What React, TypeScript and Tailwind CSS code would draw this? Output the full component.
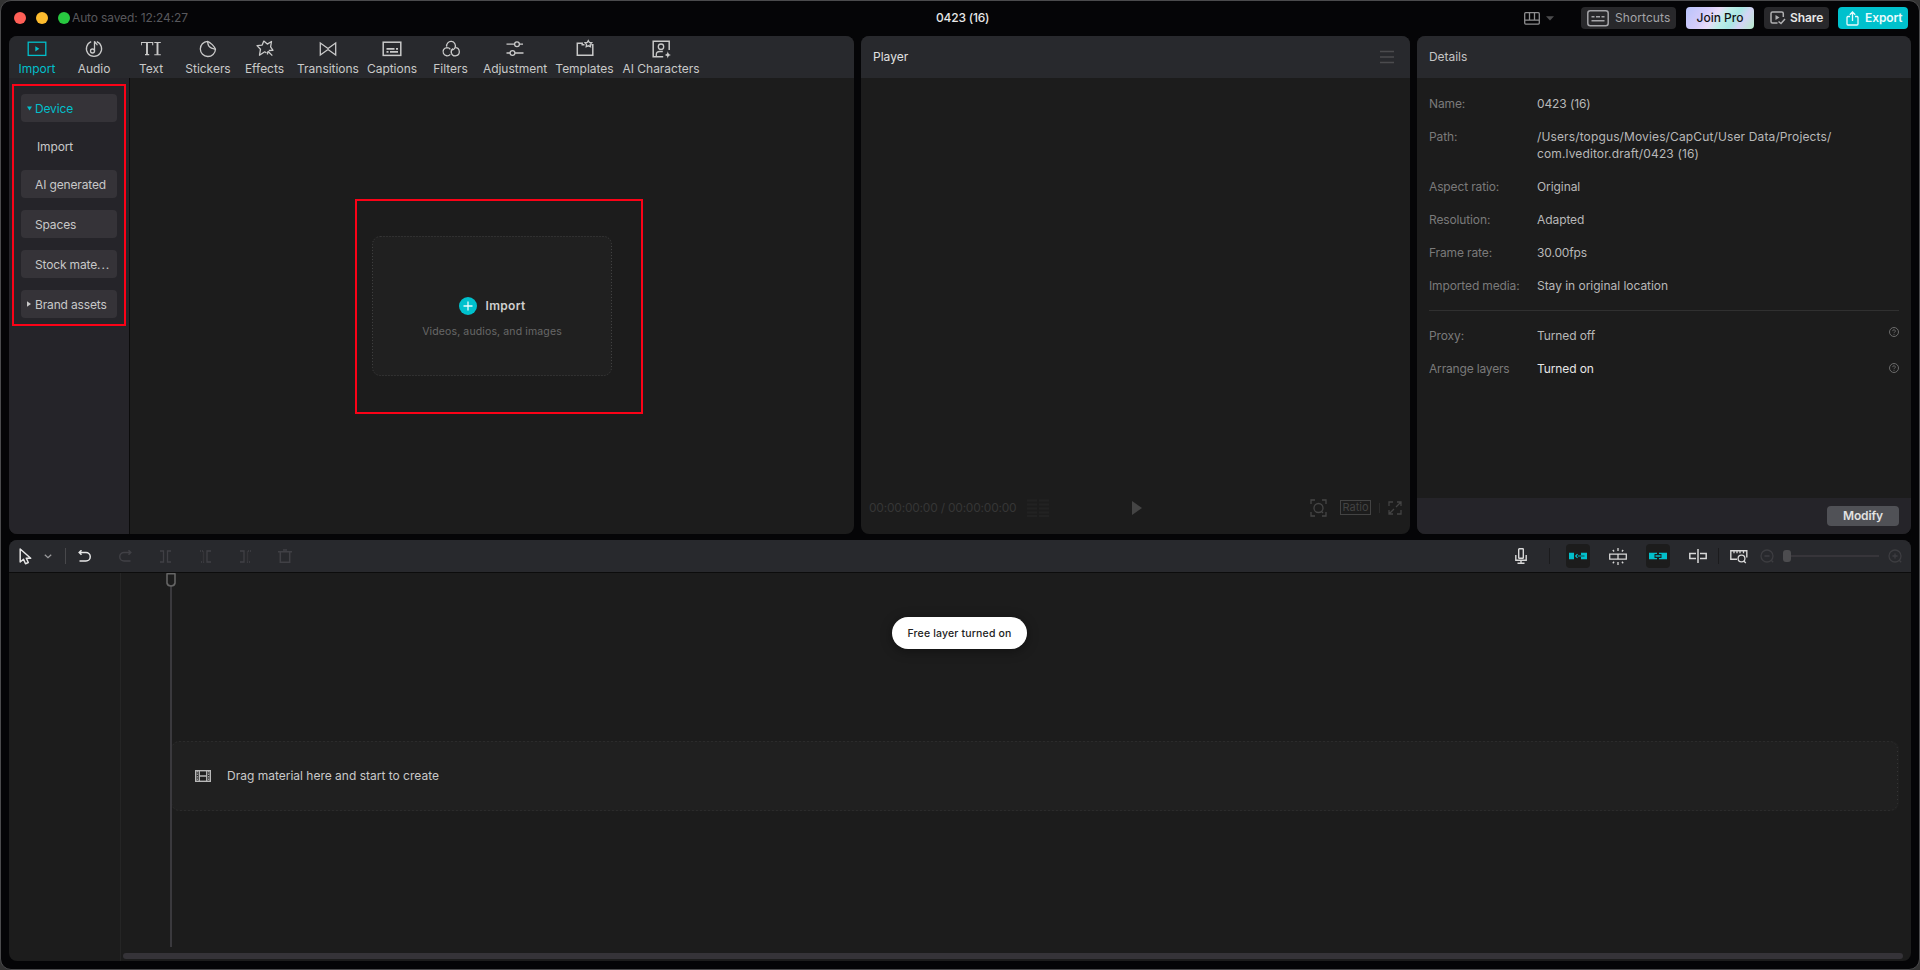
import React from "react";

type IconProps = { className?: string; children: React.ReactNode; w?: number; h?: number };

function Svg({ className = "", children, w = 20, h = 20 }: IconProps) {
  return (
    <svg
      width={w}
      height={h}
      viewBox={`0 0 ${w} ${h}`}
      fill="none"
      stroke="currentColor"
      strokeWidth="1.3"
      className={`block shrink-0 ${className}`}
    >
      {children}
    </svg>
  );
}

const tabs = [
  {
    label: "Import",
    width: "w-[56px]",
    color: "text-[#02bfcb]",
    icon: (
      <>
        <rect x="1.2" y="3.2" width="17.6" height="13.2" />
        <path d="M8.3 7.2v5.2l4-2.6z" fill="currentColor" stroke="none" />
      </>
    ),
  },
  {
    label: "Audio",
    width: "w-[58px]",
    icon: (
      <>
        <path d="M12.8 2.7a7.6 7.6 0 1 1-5.6 0M10.500 12.500V2.2c.3 2 2.700 2 2.700 4" />
        <circle cx="8.500" cy="12" r="2" />
      </>
    ),
  },
  {
    label: "Text",
    width: "w-[56px]",
    icon: (
      <>
        <path d="M.3 6.200V3.500h11.400v2.700M4 15.600h4.200M13.300 3.500h6.500M13.300 15.700h6.500" strokeWidth="1.100" />
        <path d="M6 3.600v12M16.500 3.600v12.200" strokeWidth="1.900" />
      </>
    ),
  },
  {
    label: "Stickers",
    width: "w-[58px]",
    icon: (
      <>
        <path d="M9.5 2.3a7.6 7.6 0 1 0 8 8C16.500 7.600 12.500 3.300 9.500 2.300z" />
        <path d="M9.500 2.300c.5 4 .8 7 8 8" />
      </>
    ),
  },
  {
    label: "Effects",
    width: "w-[55px]",
    icon: (
      <>
        <path d="M11.500 14l-1.800-1.200-5.200 3.400 1-6L2 6.600l5.200-.5 1.600-4 3.500 3 4.200-2.600-.9 5.300 2.400 3.500-4.200.2" strokeLinejoin="round" />
        <path d="M13 12.200l4.300 4.400M12.800 12.300l-.3 3.200" />
      </>
    ),
  },
  {
    label: "Transitions",
    width: "w-[72px]",
    icon: <path d="M2.300 4v12L10 10.500 17.700 16V4L10 9.500z" />,
  },
  {
    label: "Captions",
    width: "w-[56px]",
    icon: (
      <>
        <rect x="1.200" y="3.200" width="17.600" height="13.200" strokeWidth="1.500" />
        <path d="M4.500 9.800h8M14 9.800h2M4.500 12.800h2M8 12.800h8" strokeWidth="1.700" />
      </>
    ),
  },
  {
    label: "Filters",
    width: "w-[61px]",
    icon: (
      <>
        <path d="M5.700 7.700a4.400 4.400 0 1 1 8.300 1c-.7 1.500-1.800 2.300-3.500 2.300" />
        <path d="M14.300 8.600a4.100 4.100 0 1 1-3.900 5.600c-.6-1.900.1-3.700 1.600-4.800" />
        <path d="M9.300 15.300A4.100 4.100 0 1 1 5.900 8.600c1.500 0 2.700.6 3.400 1.700" />
      </>
    ),
  },
  {
    label: "Adjustment",
    width: "w-[68px]",
    icon: (
      <>
        <path d="M1.500 5.200h8M14.500 5.200h3.500M1.500 14h3.500M10 14h8.500" />
        <circle cx="12" cy="5.200" r="2.400" />
        <circle cx="7.500" cy="14" r="2.400" />
      </>
    ),
  },
  {
    label: "Templates",
    width: "w-[71px]",
    icon: (
      <>
        <path d="M9.500 5.700H7.200V4.200H2.300v12h15.500V5.800h-1.500" strokeWidth="1.500" />
        <path d="M13.300 1.600l1.100 1.900 2.300.3-1.500 1.600.3 2.300-2.200-.9-2.100.9.300-2.300-1.500-1.600 2.200-.3z" />
      </>
    ),
  },
  {
    label: "AI Characters",
    width: "w-[82px]",
    icon: (
      <>
        <path d="M18.200 11V2.300H2.200v15.500h10" strokeWidth="1.500" />
        <circle cx="10" cy="7.700" r="2.700" />
        <path d="M5.300 17.500v-2c0-2 1.500-3 3.500-3h3" />
        <path d="M16.800 12.300c.5 2.500 1 3.200 3.200 3.600-2.200.5-2.700 1-3.200 3.700-.5-2.700-1-3.200-3.200-3.700 2.200-.4 2.700-1.100 3.200-3.600z" fill="currentColor" stroke="none" />
      </>
    ),
  },
];

function TitleBar() {
  return (
    <header className="flex h-[35px] shrink-0 items-center pr-[11px] pb-px pl-[13px]">
      <div className="flex w-[910px] items-center">
        <span className="size-3 rounded-full bg-[#ff5f57]" />
        <span className="ml-2.5 size-3 rounded-full bg-[#febc2e]" />
        <span className="ml-2.5 size-3 rounded-full bg-[#28c840]" />
        <span className="ml-0.5 pb-px text-[12px] leading-4 tracking-[-0.13px] text-[#58585c]">Auto saved: 12:24:27</span>
      </div>
      <span className="ml-3 pb-px text-[12px] leading-4 font-medium tracking-[-0.2px] text-[#e8e8e8]">0423 (16)</span>
      <div className="ml-auto flex items-center text-[12px] leading-4">
        <Svg w={16} h={13} className="text-[#8e8e90]">
          <rect x=".7" y=".7" width="14.600" height="11.400" rx="1" />
          <path d="M1 8.200h14M5.500 1v7M10.500 1v7" />
        </Svg>
        <svg width="8" height="5" viewBox="0 0 8 5" className="ml-1.5 block">
          <path d="M0 .3h8L4 4.500z" fill="#4c4c4e" />
        </svg>
        <button className="ml-[27px] flex h-[22px] w-[95px] items-center rounded bg-[#28282b] pl-1.5 text-[#a4a4a8]">
          <Svg w={22} h={17}>
            <rect x=".8" y=".8" width="20.400" height="15" rx="2.500" strokeWidth="1.500" />
            <path d="M4.500 6.800h3M9 6.800h4M14.500 6.800h3M4.500 10.800h13" strokeWidth="1.500" />
          </Svg>
          <span className="ml-1.5 pb-px tracking-[0.08px]">Shortcuts</span>
        </button>
        <button className="ml-2.5 flex h-[22px] w-[68px] items-center justify-center rounded bg-[linear-gradient(125deg,#b9c4fb_0%,#d5ccfb_28%,#e9dcf8_42%,#bdeee8_55%,#a9e8e4_68%,#d5d4f5_80%,#b5ecc9_100%)] pb-px font-medium text-[#111]">
          Join Pro
        </button>
        <button className="ml-2.5 flex h-[22px] w-[65px] items-center rounded bg-[#28282b] pl-1.5 font-semibold text-[#e6e6e6]">
          <Svg w={16} h={14} className="text-[#b0b0b2]">
            <path d="M13.300 6V2.500a1.500 1.500 0 0 0-1.500-1.500H2.500A1.500 1.500 0 0 0 1 2.500v8A1.500 1.500 0 0 0 2.500 12h5" strokeWidth="1.500" />
            <path d="M5.500 4v5l4-2.500z" fill="currentColor" stroke="none" />
            <path d="M8.500 10.500l2.500 2 4-4.500" strokeWidth="1.500" />
          </Svg>
          <span className="ml-1 pb-px tracking-[-0.1px]">Share</span>
        </button>
        <button className="ml-[9px] flex h-[22px] w-[70px] items-center rounded bg-[#00c1cd] pl-2 font-semibold text-[#e9fbfc]">
          <Svg w={13} h={15}>
            <path d="M4 5.500H1.800A1 1 0 0 0 1 6.300V13a1 1 0 0 0 1 1h9a1 1 0 0 0 1-1V6.300a1 1 0 0 0-.8-.8H9M6.500 10V1.300M3.800 3.800L6.500 1l2.700 2.800" />
          </Svg>
          <span className="ml-1.5 pb-px tracking-[-0.1px]">Export</span>
        </button>
      </div>
    </header>
  );
}

function SideItem({ label, arrow, active }: { label: string; arrow?: "down" | "right"; active?: boolean }) {
  return (
    <div className={`flex h-7 items-center rounded bg-[#353338] pl-1.5 text-[12px] ${active ? "text-[#02bfcb]" : "text-[#c8c8c8]"}`}>
      <span className="flex w-2 shrink-0">
        {arrow === "down" && (
          <svg width="5" height="5" viewBox="0 0 5 5"><path d="M0 .5h5L2.500 4.500z" fill="currentColor" /></svg>
        )}
        {arrow === "right" && (
          <svg width="5" height="6" viewBox="0 0 5 6"><path d="M0 .3v5.400L4 3z" fill="currentColor" /></svg>
        )}
      </span>
      <span className="whitespace-nowrap pt-px tracking-[-0.15px]">
        {label.replace("...", "")}
        {label.endsWith("...") && <span className="tracking-[0.9px]">...</span>}
      </span>
    </div>
  );
}

function MediaPanel() {
  return (
    <section className="flex w-[845px] shrink-0 flex-col overflow-hidden rounded-lg bg-[#1c1c1c]">
      <nav className="flex h-[42px] shrink-0 bg-[#28292d]">
        {tabs.map((t) => (
          <div key={t.label} className={`flex shrink-0 flex-col items-center pt-[3px] ${t.width} ${t.color ?? "text-[#c9c9c9]"}`}>
            <Svg>{t.icon}</Svg>
            <span className="mt-px whitespace-nowrap text-[12px] leading-[17px] tracking-[-0.02px]">{t.label}</span>
          </div>
        ))}
      </nav>
      <div className="flex flex-1">
        <aside className="relative flex w-[121px] flex-col border-r border-[#0b0b0b] bg-[#252429] px-3 pt-4">
          <SideItem label="Device" arrow="down" active />
          <div className="flex h-12 items-center pt-px pl-4 text-[12px] tracking-[-0.15px] text-[#c8c8c8]">Import</div>
          <div className="flex flex-col gap-3">
            <SideItem label="AI generated" />
            <SideItem label="Spaces" />
            <SideItem label="Stock mate..." />
            <SideItem label="Brand assets" arrow="right" />
          </div>
          <div className="absolute top-1.5 left-[3px] h-[242px] w-[114px] border-2 border-[#fb0217]" />
        </aside>
        <div className="flex flex-1 items-start pt-[121px] pl-[225px]">
          <div className="relative flex h-[215px] w-[288px] border-2 border-[#fb0217] pt-[35px] pl-[15px]">
            <div className="relative flex h-[140px] w-[240px] flex-col items-center rounded-lg bg-[#202020] pt-[60px]">
              <svg className="absolute inset-0" width="240" height="140">
                <rect x=".5" y=".5" width="239" height="139" rx="8" fill="none" stroke="#414141" strokeDasharray="1 2" />
              </svg>
              <div className="flex h-5 items-center gap-[9px]">
                <svg width="18" height="18" viewBox="0 0 18 18">
                  <circle cx="9" cy="9" r="9" fill="#00c1cd" />
                  <path d="M9 4.500v9M4.500 9h9" stroke="#e9fbfc" strokeWidth="1.300" />
                </svg>
                <span className="text-[12px] font-semibold tracking-[0.3px] text-[#cfcfcf]">Import</span>
              </div>
              <span className="mt-2 text-[10.500px] leading-4 tracking-[0.13px] text-[#686868]">Videos, audios, and images</span>
            </div>
          </div>
        </div>
      </div>
    </section>
  );
}

function PlayerPanel() {
  return (
    <section className="flex w-[549px] shrink-0 flex-col overflow-hidden rounded-lg bg-[#1c1c1c]">
      <div className="flex h-[42px] items-center justify-between bg-[#28292d] pr-4 pl-3 text-[12px] leading-4 text-[#e2e2e2]">
        Player
        <Svg w={14} h={14} className="text-[#4b4b4e]">
          <path d="M0 1.500h14M0 7h14M0 12.500h14" />
        </Svg>
      </div>
      <div className="flex-1" />
      <div className="flex h-12 items-center pb-[5px] pl-2 text-[12px] text-[#363636]">
        <span className="w-[158px] whitespace-nowrap tracking-[-0.22px]">00:00:00:00 / 00:00:00:00</span>
        <Svg w={22} h={18} className="text-[#222222]">
          <path d="M0 1.500h10M12 1.500h10M0 5.500h10M12 5.500h10M0 9.500h10M12 9.500h10M0 13.500h10M12 13.500h10M0 17h10M12 17h10" strokeWidth="2" />
        </Svg>
        <svg width="10" height="14" viewBox="0 0 10 14" className="ml-[83px] block">
          <path d="M0 0v14l10-7z" fill="#444" />
        </svg>
        <Svg w={17} h={18} className="ml-[168px] text-[#454545]">
          <path d="M1 5V1h4M12 1h4v4M1 13v4h4M12 17h4v-4" />
          <circle cx="8.500" cy="9" r="4.500" />
          <path d="M11 12l2 2" />
        </Svg>
        <span className="ml-[13px] flex h-[15px] w-[31px] items-center justify-center border border-[#434343] text-[11px] text-[#434343]">Ratio</span>
        <span className="ml-2 h-2.5 w-px bg-[#2b2b2b]" />
        <Svg w={14} h={14} className="ml-2 text-[#434343]">
          <path d="M1 5V1h4M9 1h4v4M13 9v4H9M5 13H1V9M8 6l5-5M6 8l-5 5" />
        </Svg>
      </div>
    </section>
  );
}

const details = [
  ["Name:", "0423 (16)", "tracking-[-0.1px]"],
  ["Path:", "/Users/topgus/Movies/CapCut/User Data/Projects/\ncom.lveditor.draft/0423 (16)", "tracking-[0.13px]"],
  ["Aspect ratio:", "Original", "tracking-[-0.08px]"],
  ["Resolution:", "Adapted", "tracking-[-0.08px]"],
  ["Frame rate:", "30.00fps", "tracking-[-0.15px]"],
  ["Imported media:", "Stay in original location", "tracking-[-0.03px]"],
];

function Help({ className }: { className: string }) {
  return (
    <Svg w={10} h={10} className={`ml-auto text-[#6c6c6c] ${className}`}>
      <circle cx="5" cy="5" r="4.500" strokeWidth="1" />
      <path d="M3.700 4.100a1.300 1.300 0 1 1 1.900 1.100c-.5.300-.6.500-.6 1M5 7v.8" strokeWidth=".9" />
    </Svg>
  );
}

function DetailsPanel() {
  return (
    <section className="flex w-[494px] shrink-0 flex-col overflow-hidden rounded-lg bg-[#1c1c1c] text-[12px] leading-[17px]">
      <div className="flex h-[42px] shrink-0 items-center bg-[#28292d] px-3 leading-4 tracking-[-0.05px] text-[#c5c5c5]">Details</div>
      <div className="flex flex-1 flex-col px-3 pt-[17px]">
        <dl className="flex flex-col gap-4">
          {details.map(([k, v, spacing]) => (
            <div key={k} className="flex">
              <dt className="w-[108px] shrink-0 tracking-[-0.13px] text-[#7a7a7a]">{k}</dt>
              <dd className={`whitespace-pre text-[#b8b8b8] ${spacing}`}>{v}</dd>
            </div>
          ))}
        </dl>
        <div className="mt-4 h-px shrink-0 bg-[#303030]" />
        <div className="mt-4 flex">
          <span className="w-[108px] tracking-[-0.1px] text-[#7a7a7a]">Proxy:</span>
          <span className="tracking-[-0.1px] text-[#b8b8b8]">Turned off</span>
          <Help className="" />
        </div>
        <div className="mt-4 flex">
          <span className="w-[108px] tracking-[-0.17px] text-[#7a7a7a]">Arrange layers</span>
          <span className="tracking-[-0.1px] text-[#e6e6e6]">Turned on</span>
          <Help className="mt-[3px]" />
        </div>
      </div>
      <div className="flex h-9 shrink-0 items-center justify-end bg-[#252429] pr-3">
        <button className="h-5 w-[72px] rounded bg-[#505156] text-[12px] leading-5 font-semibold tracking-[-0.1px] text-[#e2e2e2]">Modify</button>
      </div>
    </section>
  );
}

function TimelineToolbar() {
  return (
    <div className="flex h-[33px] shrink-0 items-center border-b border-[#0c0c0c] bg-[#28292d] text-[#d8d8d8]">
      <Svg w={14} h={17} className="ml-2.5 text-[#e6e6e6]">
        <path d="M1.200 1v13l3.300-2.800 2 4.500 2.800-1.200-2-4.300h4.400z" strokeWidth="1.500" strokeLinejoin="round" />
      </Svg>
      <Svg w={8} h={5} className="ml-[11px] text-[#9a9a9c]">
        <path d="M.8.800L4 3.700 7.200.800" />
      </Svg>
      <span className="ml-[13px] h-4 w-px bg-[#48484b]" />
      <Svg w={13} h={13} className="ml-3 text-[#e6e6e6]">
        <path d="M1 2.500h7a4.200 4.200 0 0 1 0 8.500H1.500M3.500 .2L1.200 2.500 3.500 4.800" strokeWidth="1.500" />
      </Svg>
      <Svg w={13} h={13} className="ml-7 text-[#404045]">
        <path d="M12 2.500H5a4.200 4.200 0 0 0 0 8.500h6.500M9.500 .2L11.800 2.500 9.500 4.800" strokeWidth="1.500" />
      </Svg>
      <Svg w={11} h={13} className="ml-7 text-[#404045]">
        <path d="M0 1h3.500v11H0M11 1H7.500v11H11" />
      </Svg>
      <Svg w={11} h={13} className="ml-[29px] text-[#404045]">
        <path d="M0 1h3.500v11H0" strokeDasharray="1 1" />
        <path d="M11 1H7v11h4" />
      </Svg>
      <Svg w={11} h={13} className="ml-[29px] text-[#404045]">
        <path d="M0 1h4v11H0" />
        <path d="M11 1H7.500v11H11" strokeDasharray="1 1" />
      </Svg>
      <Svg w={14} h={14} className="ml-[27px] text-[#404045]">
        <path d="M0 2.700h14M5 1h4M2.300 3v10.300h9.400V3" strokeWidth="1.500" />
      </Svg>

      <div className="ml-auto flex items-center pr-[9px]">
        <Svg w={12} h={16}>
          <rect x="3.700" y=".7" width="4.600" height="9.600" rx=".6" strokeWidth="1.400" />
          <path d="M.8 7v5.300h10.400V7M6 12.500V15M2.500 15.200h7" strokeWidth="1.400" />
        </Svg>
        <span className="ml-[22px] h-4 w-px bg-[#1b1b1d]" />
        <span className="ml-4 flex size-6 items-center justify-center rounded bg-[#1c1c1c] text-[#02bfcb]">
          <Svg w={18} h={8}>
            <path d="M0 .8h5v6.400H0zM12 .8h6v6.400h-6z" fill="currentColor" stroke="none" />
            <path d="M8.500 2.200L6.700 4l1.800 1.800M9 4h6" strokeWidth="1.200" />
            <path d="M12 4h3.500" stroke="#10484c" strokeWidth="1" />
          </Svg>
        </span>
        <Svg w={18} h={17} className="ml-[19px]">
          <path d="M.7 6.200h16.600v5H.7zM9 6.200v5M9 0v3M9 14v3M3.800 2l1.300 1.500M14.200 2l-1.300 1.500M3.800 15.200l1.300-1.500M14.200 15.200l-1.300-1.500" />
        </Svg>
        <span className="ml-[19px] flex size-6 items-center justify-center rounded bg-[#1c1c1c] text-[#02bfcb]">
          <Svg w={18} h={8}>
            <path d="M0 .8h8v1.200H5.500v4H8v1.200H0zM18 .8h-8v1.200h2.500v4H10v1.200h8z" fill="currentColor" stroke="none" />
            <path d="M6.500 4h5" strokeWidth="1.400" />
          </Svg>
        </span>
        <Svg w={18} h={14} className="ml-[19px]">
          <path d="M7 4.500H.8v5H7M11 4.500h6.200v5H11M9 0v14" strokeWidth="1.500" />
        </Svg>
        <span className="ml-[11px] h-4 w-px bg-[#1b1b1d]" />
        <Svg w={18} h={15} className="ml-[11px]">
          <path d="M7 10.300H.8V1.700h16v6.800" strokeWidth="1.400" />
          <path d="M4 2v2.300M7 2v2.300M10 2v2.300M13.500 2v2.300" />
          <circle cx="11.500" cy="9.500" r="3.400" />
          <path d="M13.800 12l2 2" />
        </Svg>
        <Svg w={14} h={14} className="ml-3 text-[#3d3d41]">
          <circle cx="7" cy="7" r="6" />
          <path d="M4.500 7h5M11.200 11.200l2 2" />
        </Svg>
        <div className="ml-[9px] flex w-[96px] items-center">
          <span className="h-3 w-2 shrink-0 rounded-[3px] bg-[#4c4c4f]" />
          <span className="h-0.5 flex-1 bg-[#37353a]" />
        </div>
        <Svg w={14} h={14} className="ml-[9px] text-[#3d3d41]">
          <circle cx="7" cy="7" r="6" />
          <path d="M4.500 7h5M7 4.500v5M11.200 11.200l2 2" />
        </Svg>
      </div>
    </div>
  );
}

function Timeline() {
  return (
    <section className="relative mx-2 mt-1.5 flex h-[421px] shrink-0 flex-col overflow-hidden rounded-lg bg-[#1c1c1c]">
      <TimelineToolbar />
      <div className="flex flex-1">
        <div className="w-[112px] shrink-0 border-r border-[#252525]" />
        <div className="flex flex-1 flex-col">
          <div className="relative mt-[168px] mr-3 ml-[50px] flex h-[70px] shrink-0 items-center rounded-lg bg-[#202020] pl-6">
            <svg className="absolute inset-0 size-full">
              <rect x=".5" y=".5" width="1726" height="69" rx="8" fill="none" stroke="#363636" strokeDasharray="1 3" />
            </svg>
            <Svg w={16} h={12} className="text-[#b8b8b8]">
              <rect x=".7" y=".7" width="14.600" height="10.600" strokeWidth="1.400" />
              <path d="M4.300 1v10M11.700 1v10M4.300 6h7.400" />
              <path d="M2.300 1v10M13.700 1v10" strokeWidth="1" strokeDasharray="1.500 1" />
            </Svg>
            <span className="ml-4 text-[12px] text-[#c9c9c9]">Drag material here and start to create</span>
          </div>
          <div className="mt-auto mr-2 mb-0.5 ml-[2px] h-1.5 rounded-full bg-[#353338]" />
        </div>
      </div>
      <svg width="10" height="375" viewBox="0 0 10 375" className="absolute top-[33px] left-[157px]">
        <path d="M5 13v361" stroke="#3a393d" strokeWidth="2" />
        <path d="M1 .8h8V10Q8.500 12.800 5 13 1.500 12.800 1 10z" fill="#1c1c1c" stroke="#656565" strokeWidth="1.600" strokeLinejoin="round" />
      </svg>
      <div className="absolute top-[77px] left-[883px] flex h-8 w-[135px] items-center justify-center rounded-full bg-white pt-px text-[10.500px] font-medium tracking-[0.17px] whitespace-nowrap text-[#222] shadow-[0_2px_12px_rgba(0,0,0,0.4)]">
        Free layer turned on
      </div>
    </section>
  );
}

export default function App() {
  return (
    <div className="h-[970px] w-[1920px] overflow-hidden bg-[#333]">
      <div
        className="flex h-full flex-col overflow-hidden rounded-[11px] border border-[#4b4b4d] bg-[#050507]"
        style={{ fontFamily: 'Inter, "Liberation Sans", sans-serif' }}
      >
        <TitleBar />
        <main className="flex h-[498px] shrink-0 gap-[7px] px-2">
          <MediaPanel />
          <PlayerPanel />
          <DetailsPanel />
        </main>
        <Timeline />
      </div>
    </div>
  );
}
